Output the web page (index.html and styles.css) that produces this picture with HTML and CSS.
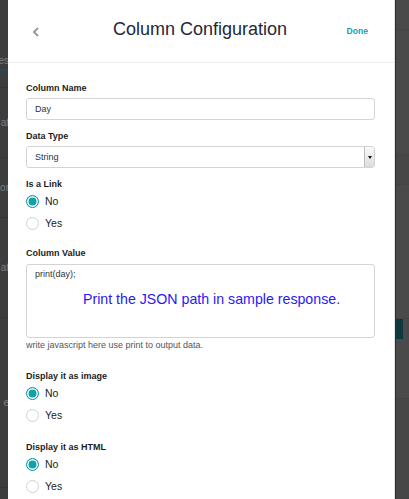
FILE: index.html
```html
<!DOCTYPE html>
<html>
<head>
<meta charset="utf-8">
<link rel="stylesheet" href="styles.css">
</head>
<body>
<div class="screen">
  <div class="backdrop-left">
    <div class="bg-row r1"><span class="bg-text tab">es</span></div>
    <div class="bg-row r2"><span class="bg-text">at</span></div>
    <div class="bg-row r3"><span class="bg-text">or</span></div>
    <div class="bg-row r4"><span class="bg-text">at</span></div>
    <div class="bg-row r5"><span class="bg-text">e</span></div>
  </div>
  <div class="modal">
    <div class="modal-header">
      <svg class="back" width="8" height="10" viewBox="0 0 8 10"><polyline points="6,1 2,5 6,9" fill="none" stroke="#9a9a9a" stroke-width="2"/></svg>
      <h1 class="title">Column Configuration</h1>
      <span class="done">Done</span>
    </div>
    <div class="modal-body">
      <div class="label first">Column Name</div>
      <div class="input">Day</div>

      <div class="label">Data Type</div>
      <div class="select">
        <span class="select-text">String</span>
        <span class="select-btn"><span class="caret"></span></span>
      </div>

      <div class="label">Is a Link</div>
      <div class="radio-row"><span class="radio checked"></span><span class="radio-text">No</span></div>
      <div class="radio-row"><span class="radio"></span><span class="radio-text">Yes</span></div>

      <div class="label gap-lg">Column Value</div>
      <div class="textarea">
        <div class="code">print(day);</div>
        <div class="annotation">Print the JSON path in sample response.</div>
      </div>
      <div class="help">write javascript here use print to output data.</div>

      <div class="label gap-xl">Display it as image</div>
      <div class="radio-row"><span class="radio checked"></span><span class="radio-text">No</span></div>
      <div class="radio-row"><span class="radio"></span><span class="radio-text">Yes</span></div>

      <div class="label gap-md">Display it as HTML</div>
      <div class="radio-row"><span class="radio checked"></span><span class="radio-text">No</span></div>
      <div class="radio-row"><span class="radio"></span><span class="radio-text">Yes</span></div>
    </div>
  </div>
  <div class="backdrop-right">
    <div class="rb rb1"></div>
    <div class="rb rb2"></div>
    <div class="rb rb3"></div>
    <div class="rb rb4"></div>
    <div class="rb rb-teal"></div>
    <div class="rb rb5"></div>
    <div class="rb rb6"></div>
  </div>
</div>
</body>
</html>
```

FILE: styles.css
```css
* { box-sizing: border-box; }
html, body { margin: 0; padding: 0; }
body {
  width: 409px;
  height: 499px;
  overflow: hidden;
  background: #444;
  font-family: "Liberation Sans", Arial, Helvetica, sans-serif;
}
.screen {
  display: flex;
  height: 499px;
}
.backdrop-left {
  width: 8px;
  flex: none;
  background: #3d3d3d;
  display: flex;
  flex-direction: column;
  overflow: hidden;
}
.bg-row {
  display: flex;
  justify-content: flex-end;
  border-bottom: 1px solid #363636;
}
.bg-text {
  font-size: 10px;
  line-height: 12px;
  color: #7e7e7e;
  white-space: nowrap;
  margin-right: -1px;
}
.bg-text.tab { border-bottom: 2px solid #1d4f52; padding-bottom: 2px; }
.r1 { height: 88px; align-items: flex-end; padding-bottom: 16px; }
.r2 { height: 70px; align-items: center; }
.r3 { height: 60px; align-items: center; }
.r4 { height: 100px; align-items: center; }
.r5 { height: 170px; align-items: center; }

.modal {
  width: 387px;
  flex: none;
  background: #fff;
  border-right: 1px solid #e4e4e4;
  display: flex;
  flex-direction: column;
}
.modal-header {
  height: 63px;
  border-bottom: 1px solid #ececec;
  display: grid;
  grid-template-columns: 1fr auto 1fr;
  align-items: start;
  padding: 0 26px 0 24px;
}
.back { margin-top: 27px; display: block; }
.title {
  margin: 19px 0 0;
  font-size: 18px;
  line-height: 20px;
  font-weight: normal;
  color: #1e2838;
}
.done {
  justify-self: end;
  margin-top: 26px;
  font-size: 8.6px;
  line-height: 11px;
  font-weight: bold;
  color: #14a0a8;
}
.modal-body {
  padding: 20px 19px 0 18px;
  display: flex;
  flex-direction: column;
}
.label {
  font-size: 9px;
  line-height: 11px;
  font-weight: bold;
  color: #1c1c1c;
  margin-top: 11px;
}
.label.first { margin-top: 0; }
.label.gap-lg { margin-top: 14px; }
.label.gap-xl { margin-top: 20px; }
.label.gap-md { margin-top: 16px; }
.input, .select {
  margin-top: 4px;
  height: 22px;
  border: 1px solid #d4d4d4;
  border-radius: 3px;
  font-size: 9px;
  color: #333;
  display: flex;
  align-items: center;
}
.input { padding-left: 8px; }
.select { padding-left: 8px; justify-content: space-between; overflow: hidden; }
.select-btn {
  width: 10px;
  align-self: stretch;
  border-left: 1px solid #bdbdbd;
  background: linear-gradient(#fafafa, #dcdcdc);
  display: flex;
  align-items: center;
  justify-content: center;
}
.caret {
  width: 0;
  height: 0;
  border-left: 2.5px solid transparent;
  border-right: 2.5px solid transparent;
  border-top: 3px solid #111;
}
.radio-row {
  height: 22px;
  display: flex;
  align-items: center;
}
.radio {
  width: 13px;
  height: 13px;
  border-radius: 50%;
  border: 1px solid #d2d2d2;
  background: #fff;
  flex: none;
}
.radio.checked {
  border: 1.5px solid #14a0a8;
  background: #14a0a8;
  box-shadow: inset 0 0 0 1.5px #fff;
}
.radio-text {
  margin-left: 6px;
  font-size: 10.5px;
  color: #1c1c1c;
}
.textarea {
  position: relative;
  margin-top: 5px;
  height: 74px;
  border: 1px solid #d4d4d4;
  border-radius: 3px;
  padding: 4px 8px;
}
.code {
  font-size: 9px;
  line-height: 11px;
  color: #333;
}
.annotation {
  position: absolute;
  left: 56px;
  top: 26px;
  font-size: 14.2px;
  line-height: 16px;
  color: #2a18f5;
  white-space: nowrap;
}
.help {
  margin-top: 2px;
  font-size: 9px;
  line-height: 11px;
  color: #555;
}
.backdrop-right {
  flex: 1;
  background: #4a4a4a;
  border-left: 1px solid #2c2c2c;
  display: flex;
  flex-direction: column;
}
.rb { border-bottom: 1px solid #444; }
.rb1 { height: 30px; }
.rb2 { height: 125px; }
.rb3 { height: 30px; background: #474747; }
.rb4 { height: 134px; }
.rb-teal { height: 20px; width: 7px; background: #0e3a3e; border: none; }
.rb5 { height: 60px; }
.rb6 { height: 100px; background: #474747; }
```
